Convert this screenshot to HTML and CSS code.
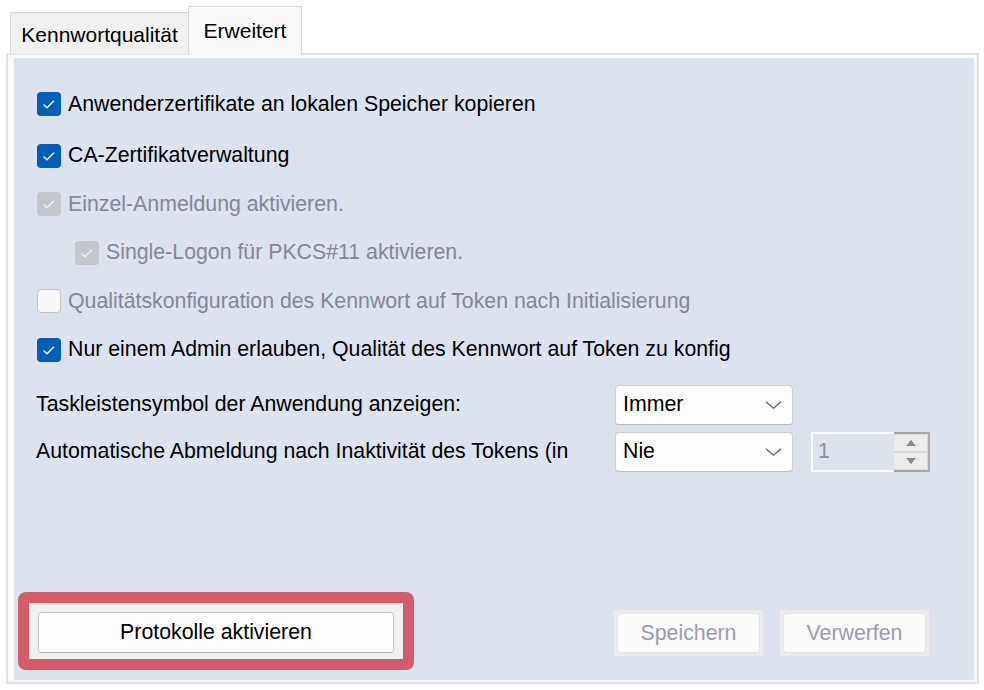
FILE: index.html
```html
<!DOCTYPE html>
<html lang="de">
<head>
<meta charset="UTF-8">
<title>Erweitert</title>
<link rel="stylesheet" href="styles.css">
</head>
<body>
<div class="tabs">
    <div class="tab tab-first">Kennwortqualität</div>
    <div class="tab active">Erweitert</div>
</div>
<div class="panel">
    <div class="page">
        <div class="checks">
            <label class="check"><span class="box on"><svg viewBox="0 0 24 24"><path d="M6.5 12.5l3.5 3.2 7-7" /></svg></span>Anwenderzertifikate an lokalen Speicher kopieren</label>
            <label class="check"><span class="box on"><svg viewBox="0 0 24 24"><path d="M6.5 12.5l3.5 3.2 7-7" /></svg></span>CA-Zertifikatverwaltung</label>
            <label class="check disabled"><span class="box dim"><svg viewBox="0 0 24 24"><path d="M6.5 12.5l3.5 3.2 7-7" /></svg></span>Einzel-Anmeldung aktivieren.</label>
            <label class="check disabled sub"><span class="box dim"><svg viewBox="0 0 24 24"><path d="M6.5 12.5l3.5 3.2 7-7" /></svg></span>Single-Logon für PKCS#11 aktivieren.</label>
            <label class="check disabled"><span class="box off"></span>Qualitätskonfiguration des Kennwort auf Token nach Initialisierung</label>
            <label class="check"><span class="box on"><svg viewBox="0 0 24 24"><path d="M6.5 12.5l3.5 3.2 7-7" /></svg></span>Nur einem Admin erlauben, Qualität des Kennwort auf Token zu konfig</label>
        </div>
        <div class="settings">
            <span class="lbl">Taskleistensymbol der Anwendung anzeigen:</span>
            <div class="combo">Immer<svg class="chev" viewBox="0 0 18 10"><path d="M1 1.5l8 7 8-7" /></svg></div>
            <span></span>
            <span class="lbl">Automatische Abmeldung nach Inaktivität des Tokens (in</span>
            <div class="combo">Nie<svg class="chev" viewBox="0 0 18 10"><path d="M1 1.5l8 7 8-7" /></svg></div>
            <div class="spin">
                <span class="spin-val">1</span>
                <div class="spin-btns">
                    <span class="spin-btn"><i class="arrow-up"></i></span>
                    <span class="spin-btn"><i class="arrow-down"></i></span>
                </div>
            </div>
        </div>
        <div class="actions">
            <div class="highlight">
                <button class="btn btn-main">Protokolle aktivieren</button>
            </div>
            <div class="right">
                <span class="btn-frame"><button class="btn" disabled>Speichern</button></span>
                <span class="btn-frame"><button class="btn" disabled>Verwerfen</button></span>
            </div>
        </div>
    </div>
</div>
</body>
</html>
```

FILE: styles.css
```css
body { margin: 0; font-family: "Liberation Sans", Arial, sans-serif; font-size: 21.3px; color: #000; background: #fff; }

.tabs { display: flex; align-items: flex-end; height: 54px; padding-left: 10px; position: relative; z-index: 1; }
.tab { box-sizing: border-box; height: 42px; display: flex; align-items: center; justify-content: center; border: 1px solid #dadada; border-bottom: none; background: #f0f0f0; padding-top: 2px; font-size: 21px; }
.tab-first { width: 178px; border-right: none; }
.tab.active { width: 114px; height: 49px; margin-bottom: -1px; background: #f9f9f9; padding-top: 0; }

.panel { margin: -1px 5px 0 6px; border: 2px solid #e4e4e4; padding: 3px 3px 2px 6px; background: #f9f9f9; }
.page { height: 622px; background: #dce3ec; display: flex; flex-direction: column; }

.checks { display: flex; flex-direction: column; gap: 24.5px; padding: 34px 0 0 23px; }
.check { display: flex; align-items: center; gap: 7px; height: 24px; }
.check:first-child { margin-bottom: 3px; }
.check.disabled { color: #858895; }
.check.sub { margin-left: 38px; }
.box { width: 24px; height: 24px; border-radius: 4px; box-sizing: border-box; flex: none; }
.box svg { width: 24px; height: 24px; display: block; }
.box path { fill: none; stroke: #fff; stroke-width: 1.4; }
.box.on { background: #005fb8; }
.box.dim { background: #c3c6cb; }
.box.dim path { stroke: #eef0f2; }
.box.off { background: #f7f7f7; border: 1px solid #c4c4c4; }

.settings { display: grid; grid-template-columns: 561px 178px 119px; grid-auto-rows: 40px; column-gap: 18px; row-gap: 7px; align-items: center; margin: 23px 0 0 22px; }
.combo { box-sizing: border-box; height: 40px; display: flex; align-items: center; justify-content: space-between; padding: 0 10px 0 7px; background: #fdfdfd; border: 1px solid #d2d2d2; border-bottom-color: #bfbfbf; border-radius: 4px; }
.chev { width: 17px; height: 10px; }
.chev path { fill: none; stroke: #606060; stroke-width: 1.3; }

.spin { display: flex; height: 40px; }
.spin-val { flex: 1; box-sizing: border-box; border: 2px solid #fbfbfb; border-right: none; color: #8d909b; padding-left: 5px; display: flex; align-items: center; }
.spin-btns { box-sizing: border-box; width: 36px; border: 2px solid #a9a9a9; border-left: none; background: #d9d9d9; display: flex; flex-direction: column; gap: 2px; padding: 1px 1px 1px 0; }
.spin-btn { flex: 1; background: #ececec; display: flex; align-items: center; justify-content: center; }
.arrow-up { border-left: 5px solid transparent; border-right: 5px solid transparent; border-bottom: 6px solid #8a8a8a; }
.arrow-down { border-left: 5px solid transparent; border-right: 5px solid transparent; border-top: 6px solid #8a8a8a; }

.actions { margin-top: auto; display: flex; align-items: center; justify-content: space-between; padding: 0 45px 10px 4px; }
.highlight { border: 11px solid #d65b6a; border-radius: 8px; background: #efefef; padding: 9px 9px 6px 9px; }
.btn { font: inherit; box-sizing: border-box; height: 41px; border-radius: 4px; background: #fafafa; border: 1px solid #e4e4e4; color: #9a9eac; padding: 0; }
.btn-main { width: 356px; background: #fdfdfd; border-color: #c8c8c8; border-bottom-color: #b5b5b5; color: #000; }
.right { display: flex; gap: 17px; margin-top: 4px; }
.btn-frame { display: block; padding: 3px; background: #ebebeb; }
.btn-frame .btn { width: 143px; height: 40px; display: block; }
```
